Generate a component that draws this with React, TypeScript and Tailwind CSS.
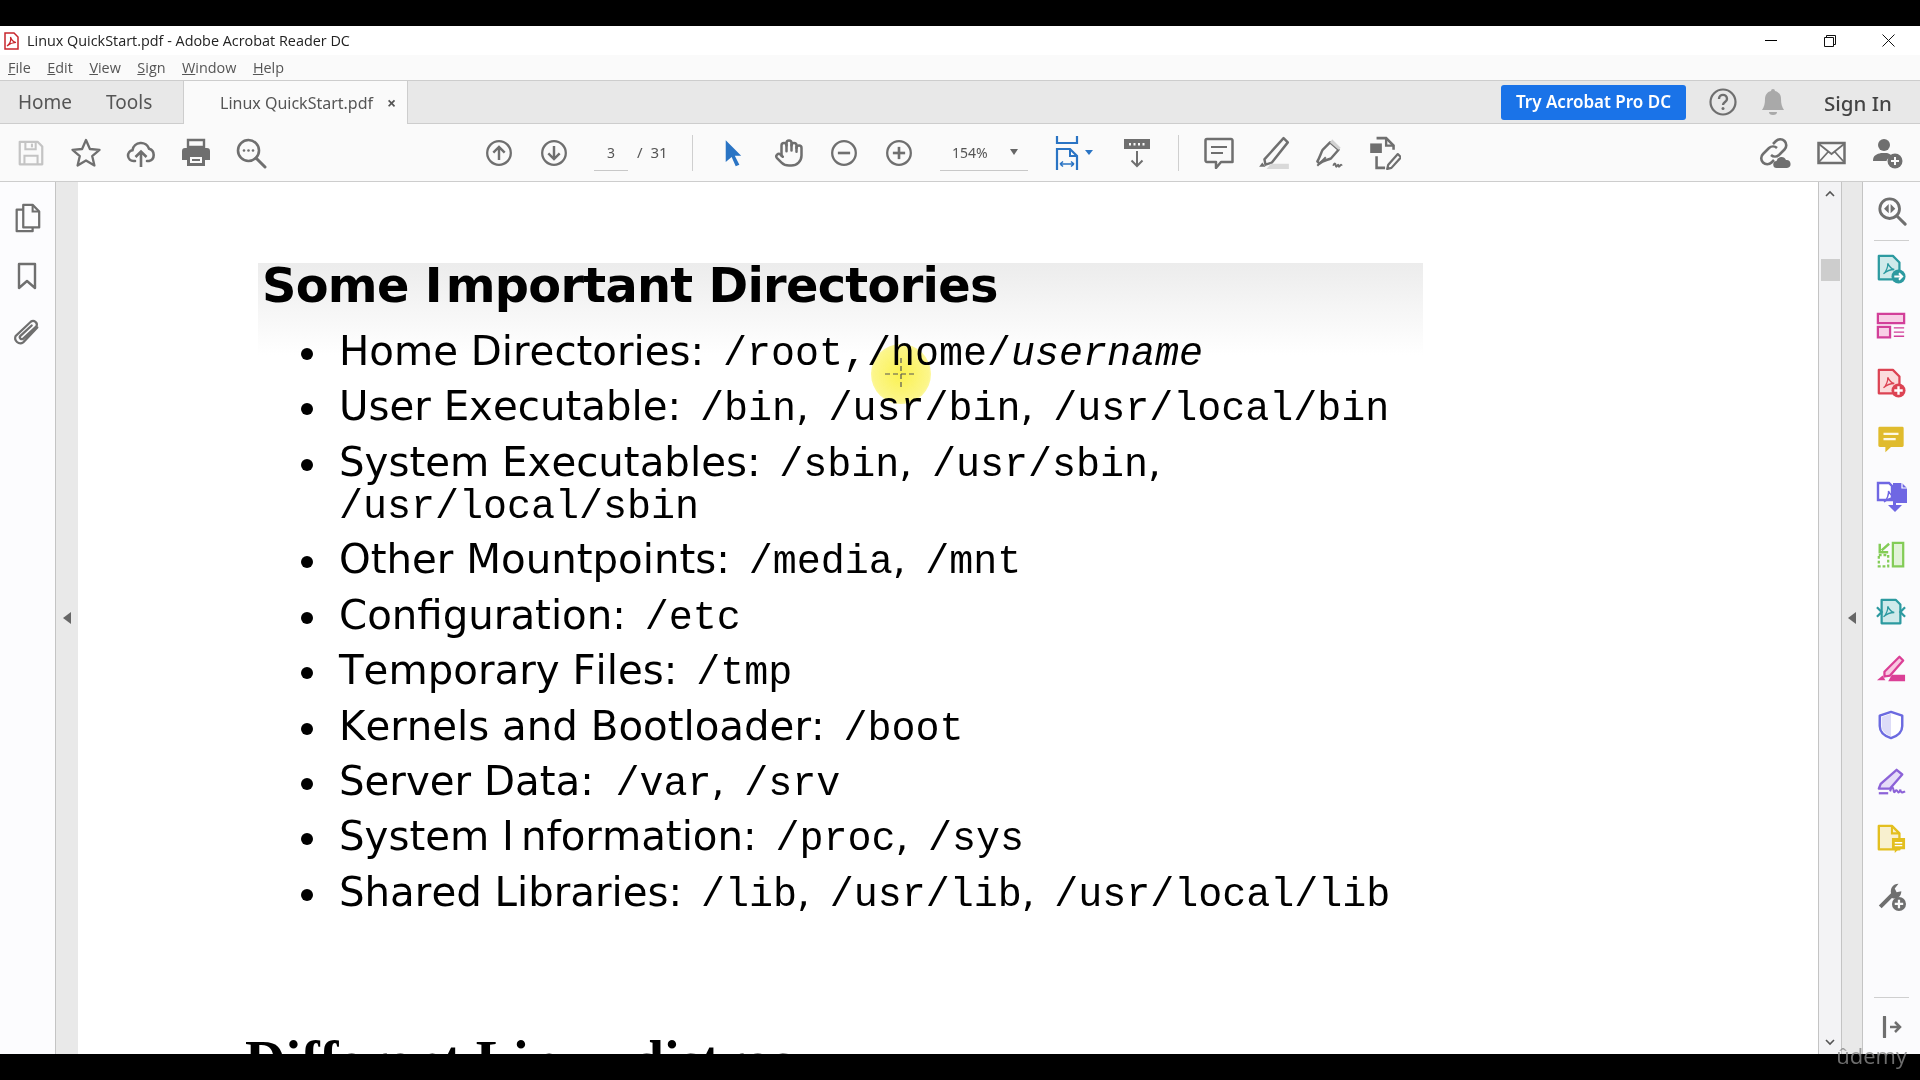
import React from 'react';
import { Hand } from 'lucide-react';

const G = '#6f6f6f';

function Svg({ size = 30, children, className = '' }: { size?: number; children: React.ReactNode; className?: string }) {
  return (
    <svg width={size} height={size} viewBox="0 0 32 32" fill="none" className={className}>
      {children}
    </svg>
  );
}

// toolbar icons
const SaveIcon = () => (
  <Svg>
    <path d="M4 4h19l5 5v19H4z" stroke="#c4c4c4" strokeWidth="2.4" strokeLinejoin="round" />
    <path d="M10 4v8h11V4M9 28v-9h14v9" stroke="#c4c4c4" strokeWidth="2.2" />
    <path d="M17 6v4" stroke="#c4c4c4" strokeWidth="2.2" />
  </Svg>
);
const StarIcon = () => (
  <Svg size={32}>
    <path d="M16 3l3.900 9 9.600.8-7.300 6.300 2.200 9.400L16 23.500l-8.400 5 2.200-9.400-7.300-6.300 9.600-.8z" stroke={G} strokeWidth="2.3" strokeLinejoin="round" />
  </Svg>
);
const UploadIcon = () => (
  <Svg size={32}>
    <path d="M10 24H8.500a5.500 5.500 0 0 1-1-10.900 8.600 8.600 0 0 1 16.600-1.400A6.400 6.400 0 0 1 24 24h-2" stroke={G} strokeWidth="2.6" strokeLinecap="round" />
    <path d="M16 30V15M10.500 20l5.500-5.500 5.500 5.500" stroke={G} strokeWidth="2.6" />
  </Svg>
);
const PrintIcon = () => (
  <Svg size={32}>
    <path d="M8 3h16v7H8z" stroke={G} strokeWidth="2.4" />
    <path d="M5 11h22a3 3 0 0 1 3 3v9h-5v-4H7v4H2v-9a3 3 0 0 1 3-3z" fill={G} />
    <path d="M7 18h18v11H7z" fill={G} />
    <path d="M10 20h12v6H10z" fill="#fafafa" />
    <path d="M12 22h8v2h-8z" fill={G} />
  </Svg>
);
const SearchMoreIcon = () => (
  <Svg size={32}>
    <circle cx="13.500" cy="13.500" r="10.500" stroke={G} strokeWidth="2.6" />
    <path d="M21 21l9 9" stroke={G} strokeWidth="3" strokeLinecap="round" />
    <circle cx="9" cy="13.500" r="1.300" fill={G} />
    <circle cx="13.500" cy="13.500" r="1.300" fill={G} />
    <circle cx="18" cy="13.500" r="1.300" fill={G} />
  </Svg>
);
const CircleArrow = ({ down }: { down?: boolean }) => (
  <Svg size={28}>
    <circle cx="16" cy="16" r="13.500" stroke={G} strokeWidth="2.6" />
    {down ? (
      <path d="M16 8v15M9.500 16.500L16 23l6.500-6.500" stroke={G} strokeWidth="2.8" />
    ) : (
      <path d="M16 24V9M9.500 15.500L16 9l6.500 6.500" stroke={G} strokeWidth="2.8" />
    )}
  </Svg>
);
const CircleSign = ({ plus }: { plus?: boolean }) => (
  <Svg size={28}>
    <circle cx="16" cy="16" r="13.500" stroke={G} strokeWidth="2.6" />
    <path d="M9 16h14" stroke={G} strokeWidth="3" />
    {plus && <path d="M16 9v14" stroke={G} strokeWidth="3" />}
  </Svg>
);
const CursorIcon = () => (
  <svg width="20" height="30" viewBox="0 0 22 30">
    <path d="M3 1l17 17h-7l5 10-4 1.500-4.500-10L3 25z" fill="#2a74c4" />
  </svg>
);
const FitIcon = () => (
  <svg width="26" height="34" viewBox="0 0 26 34" fill="none">
    <path d="M2 0v7h20V0" stroke="#2a74c4" strokeWidth="2.200" />
    <path d="M2 34V13h13l7 7v14" stroke="#2a74c4" strokeWidth="2.200" />
    <path d="M15 13v7h7" stroke="#2a74c4" strokeWidth="2" />
    <path d="M5 28h14M5 28l3-2.500M5 28l3 2.500M19 28l-3-2.500M19 28l-3 2.500" stroke="#2a74c4" strokeWidth="1.600" />
  </svg>
);
const ScrollIcon = () => (
  <svg width="28" height="30" viewBox="0 0 28 30" fill="none">
    <path d="M1 1h26v10H1z" fill={G} />
    <path d="M6 5h2v2.500H6zM10.500 5h2v2.500h-2zM15 5h2v2.500h-2zM19.500 5h2v2.500h-2z" fill="#fafafa" />
    <path d="M14 13v15M8.500 22.500L14 28l5.500-5.500" stroke={G} strokeWidth="2" />
  </svg>
);
const CommentIcon = () => (
  <Svg size={32}>
    <path d="M4 2h24a1.500 1.500 0 0 1 1.500 1.500V25H18l-5 6v-6H4a1.500 1.500 0 0 1-1.500-1.500V3.500A1.500 1.500 0 0 1 4 2z" stroke={G} strokeWidth="2.500" strokeLinejoin="round" />
    <path d="M8 10h16M8 16h12" stroke={G} strokeWidth="2.200" />
  </Svg>
);
const HighlightIcon = () => (
  <Svg size={34}>
    <path d="M25 2l4 4-15 19-6 2-1-5z" stroke={G} strokeWidth="2.300" strokeLinejoin="round" />
    <path d="M5 25l3 4H2z" fill={G} />
    <path d="M13 26h17v5H9z" fill="#d9d9d9" />
  </Svg>
);
const SignIcon = () => (
  <Svg size={34}>
    <path d="M17 6l8 7-7 8c-3 1.500-8 2-11 5l-2-2c2-3 3-7 5-11z" stroke={G} strokeWidth="2.300" strokeLinejoin="round" />
    <path d="M19 3l8 8-2 2-8-7z" fill="#d2d2d2" />
    <path d="M5 28l8-8" stroke={G} strokeWidth="1.800" />
    <path d="M20 28c1-3 2-3 2.500 0s2-3 2.500 0 2-3 3 0" stroke={G} strokeWidth="1.800" />
  </Svg>
);
const ExportEditIcon = () => (
  <Svg size={34}>
    <path d="M9 2h9l7 7v4" stroke={G} strokeWidth="2.400" />
    <path d="M18 2v7h7" stroke={G} strokeWidth="2.200" />
    <path d="M3 7h11v9H3z" fill={G} />
    <path d="M9 19v11h8" stroke={G} strokeWidth="2.400" />
    <path d="M20 27l9-10 3 3-9 10-4 1z" stroke={G} strokeWidth="2.100" strokeLinejoin="round" />
  </Svg>
);
const LinkCloudIcon = () => (
  <Svg size={32}>
    <path d="M14 7l3-3a6 6 0 0 1 8.500 8.500L20 18a6 6 0 0 1-8 0" stroke={G} strokeWidth="2.600" />
    <path d="M18 11a6 6 0 0 0-8 0l-6 6a6 6 0 0 0 8.500 8.500l2.500-2.500" stroke={G} strokeWidth="2.600" />
    <path d="M18 31a3.500 3.500 0 0 1-.5-7 5 5 0 0 1 9.500-1 4 4 0 0 1 1 8z" fill={G} />
  </Svg>
);
const MailIcon = () => (
  <svg width="29" height="24" viewBox="0 0 29 24" fill="none">
    <path d="M1.500 2h26v20h-26z" stroke={G} strokeWidth="2.500" />
    <path d="M2 3l12.500 10L27 3M2 21l9-10M27 21l-9-10" stroke={G} strokeWidth="1.800" />
  </svg>
);
const UserPlusIcon = () => (
  <Svg size={32}>
    <circle cx="13" cy="8" r="6" fill={G} />
    <path d="M2 24c0-6 4-7 8-8h6c2 .5 4 1.500 5 3-3 1-5 3-5.500 5z" fill={G} />
    <circle cx="24" cy="24" r="7.500" fill={G} />
    <path d="M24 20v8M20 24h8" stroke="#fafafa" strokeWidth="2" />
  </Svg>
);
const HelpIcon = () => (
  <svg width="28" height="28" viewBox="0 0 28 28" fill="none">
    <circle cx="14" cy="14" r="12.500" stroke={G} strokeWidth="2.200" />
    <path d="M10 11c0-5.500 8-5.500 8 0 0 3-4 3-4 6" stroke={G} strokeWidth="2.400" />
    <circle cx="14" cy="20.500" r="1.500" fill={G} />
  </svg>
);
const BellIcon = () => (
  <svg width="24" height="28" viewBox="0 0 24 28">
    <path d="M12 1a2 2 0 0 1 2 2c4 1 6 4 6 8 0 5 1 8 3 11H1c2-3 3-6 3-11 0-4 2-7 6-8a2 2 0 0 1 2-2z" fill="#a9a9a9" />
    <path d="M8 24h8a4 3 0 0 1-8 0z" fill="#a9a9a9" />
  </svg>
);

// left rail
const PagesIcon = () => (
  <Svg>
    <path d="M12 2h10l7 7v17H12z" stroke={G} strokeWidth="2.400" strokeLinejoin="round" />
    <path d="M22 2v7h7" stroke={G} strokeWidth="2.200" />
    <path d="M12 7H5v23h17v-4" stroke={G} strokeWidth="2.400" strokeLinejoin="round" />
  </Svg>
);
const BookmarkIcon = () => (
  <svg width="20" height="28" viewBox="0 0 20 28" fill="none">
    <path d="M2 2h16v24l-8-7-8 7z" stroke={G} strokeWidth="2.400" strokeLinejoin="round" />
  </svg>
);
const ClipIcon = () => (
  <Svg size={30}>
    <path d="M27 10L12 26a5.500 5.500 0 0 1-8-7L20 4a4 4 0 0 1 6 5L12 22a2 2 0 0 1-3-3L21 8" stroke={G} strokeWidth="2.400" strokeLinecap="round" />
  </Svg>
);

// right rail, colored tools
const FindIcon = () => (
  <Svg size={30}>
    <circle cx="13.500" cy="13.500" r="10.500" stroke={G} strokeWidth="3" />
    <path d="M21 21l9 9" stroke={G} strokeWidth="3.200" strokeLinecap="round" />
    <path d="M12.500 8.500v10l-5-5zM14.500 8.500v10l5-5z" fill={G} />
  </Svg>
);
const PdfGlyph = ({ c }: { c: string }) => (
  <path d="M8 21c3-2 5-8 4.500-11 2 4 4 6 7 6.500-4 0-8 1.500-11.500 4.500z" stroke={c} strokeWidth="1.400" fill="none" />
);
const tealDoc = '#2c9aa0';
const ExportPdfIcon = () => (
  <Svg>
    <path d="M3 2h15l7 7v18H3z" fill="#cfeaea" stroke={tealDoc} strokeWidth="2.400" strokeLinejoin="round" />
    <PdfGlyph c={tealDoc} />
    <circle cx="24" cy="24" r="7.500" fill={tealDoc} />
    <path d="M19.500 24h8M24.500 20.500l3.500 3.500-3.500 3.500" stroke="#fff" strokeWidth="2" />
  </Svg>
);
const LayoutIcon = () => (
  <Svg>
    <path d="M2 3h28v10H2z" fill="#f8cfe6" stroke="#d23f99" strokeWidth="2.400" />
    <path d="M2 17h13v11H2z" fill="#f8cfe6" stroke="#d23f99" strokeWidth="2.400" />
    <path d="M19 18h11M19 22.500h11M19 27h11" stroke="#d23f99" strokeWidth="1.500" />
  </Svg>
);
const CreatePdfIcon = () => (
  <Svg>
    <path d="M3 2h15l7 7v18H3z" fill="#fbdcdc" stroke="#dc4353" strokeWidth="2.400" strokeLinejoin="round" />
    <PdfGlyph c="#dc4353" />
    <circle cx="24" cy="24" r="7.500" fill="#dc4353" />
    <path d="M24 19.500v9M19.500 24h9" stroke="#fff" strokeWidth="2.500" />
  </Svg>
);
const NoteIcon = () => (
  <Svg>
    <path d="M4 3h24a1.500 1.500 0 0 1 1.500 1.500V23a1.500 1.500 0 0 1-1.500 1.500H16L10 30v-5.500H4A1.500 1.500 0 0 1 2.500 23V4.500A1.500 1.500 0 0 1 4 3z" fill="#e0bb2d" />
    <path d="M8 10.500h16M8 16h13" stroke="#fdf8e4" strokeWidth="2.400" />
  </Svg>
);
const CombineIcon = () => (
  <Svg size={32}>
    <path d="M2 2h11l3 3v14H2z" fill="#fff" stroke="#6f67e3" strokeWidth="2.400" />
    <PdfGlyph c="#6f67e3" />
    <path d="M17 2h9l5 5v15H20V19h-3z" fill="#6f67e3" />
    <path d="M26 2v5h5" stroke="#fff" strokeWidth="1.200" />
    <path d="M17 15v9h-5l7 7 7-7h-6v-9z" fill="#6f67e3" />
  </Svg>
);
const CompressIcon = () => (
  <Svg>
    <path d="M18 3h11v25H18z" fill="#e2f3d8" stroke="#83cc57" strokeWidth="2.400" />
    <path d="M3 16h10v12H3z" stroke="#83cc57" strokeWidth="2.400" strokeDasharray="3 2" />
    <path d="M14 4L6 11M4 4v9h9" stroke="#83cc57" strokeWidth="2.600" />
  </Svg>
);
const RedactIcon = () => (
  <Svg>
    <path d="M6 3h15l5 5v20H6z" fill="#cfeaea" stroke={tealDoc} strokeWidth="2.400" strokeLinejoin="round" />
    <PdfGlyph c={tealDoc} />
    <path d="M1 11l5 5-5 5M31 11l-5 5 5 5" stroke={tealDoc} strokeWidth="2.400" />
  </Svg>
);
const PinkHighlightIcon = () => (
  <Svg>
    <path d="M25 3l4 4-14 16-6 1 0-5z" fill="#f9c9e2" stroke="#db3f96" strokeWidth="2.400" strokeLinejoin="round" />
    <path d="M7 23l3 5H1z" fill="#db3f96" />
    <path d="M17 22h14v7H13z" fill="#db3f96" />
  </Svg>
);
const ShieldIcon = () => (
  <Svg>
    <path d="M16 2l12 4v11c0 7-6 11-12 13-6-2-12-6-12-13V6z" fill="#fff" stroke="#6b6ae0" strokeWidth="2.600" strokeLinejoin="round" />
    <path d="M16 4L6 7.500V17c0 6 5 9 10 11z" fill="#dddcf8" />
  </Svg>
);
const PurpleSignIcon = () => (
  <Svg>
    <path d="M22 3l6 5-13 15H3l2-5z" fill="#e6dcf8" stroke="#8c62d8" strokeWidth="2.500" strokeLinejoin="round" />
    <path d="M3 28h10" stroke="#8c62d8" strokeWidth="2.400" />
    <path d="M15 26c2-6 3-6 4 0 1 3 2-4 4 0 1 2 2 1 3-2 0 3 2 4 5 2" stroke="#8c62d8" strokeWidth="2.200" />
  </Svg>
);
const YellowDocIcon = () => (
  <Svg>
    <path d="M3 2h14l8 8v17H3z" fill="#f8f0cf" stroke="#e3bf1f" strokeWidth="2.500" strokeLinejoin="round" />
    <path d="M17 2v8h8" stroke="#e3bf1f" strokeWidth="2.200" />
    <path d="M17 15h14v12h-7l-4 4v-4h-3z" fill="#e3bf1f" />
    <path d="M20 20h8M20 23h8" stroke="#fff" strokeWidth="1.400" />
  </Svg>
);
const ToolsPlusIcon = () => (
  <Svg>
    <path d="M3 26L16 13c-1-5 2-10 8-10l-4 5 2 4 5-1c0 6-5 9-10 7L6 29z" fill={G} />
    <circle cx="24.500" cy="24.500" r="7.500" fill={G} />
    <path d="M24.500 20v9M20 24.500h9" stroke="#fafafa" strokeWidth="2.400" />
  </Svg>
);
const CollapseIcon = () => (
  <svg width="20" height="22" viewBox="0 0 20 22" fill="none">
    <path d="M2.500 1v20" stroke={G} strokeWidth="3.200" strokeLinecap="round" />
    <path d="M8 11h10M13 6l5 5-5 5" stroke={G} strokeWidth="2.500" />
  </svg>
);

const Triangle = ({ cls }: { cls: string }) => <span className={`w-0 h-0 ${cls}`} />;

const Slot = ({ children, w = 'w-[55px]' }: { children: React.ReactNode; w?: string }) => (
  <div className={`${w} h-full flex items-center justify-center shrink-0`}>{children}</div>
);

const Sep = ({ cls }: { cls: string }) => <div className={`w-px h-[36px] bg-[#cfcfcf] shrink-0 ${cls}`} />;

// tight leading so the mono runs don't stretch the line box
const Mono = ({ children }: { children: React.ReactNode }) => (
  <span className="font-['Liberation_Mono',monospace] text-[40px] leading-[30px]">{children}</span>
);

const Comma = () => <span className="mr-[7px]">, </span>;

const items: { label: React.ReactNode; content: React.ReactNode }[] = [
  { label: 'Home Directories:', content: <Mono>/root,/home/<em>username</em></Mono> },
  { label: 'User Executable:', content: <><Mono>/bin</Mono><Comma /><Mono>/usr/bin</Mono><Comma /><Mono>/usr/local/bin</Mono></> },
  { label: 'System Executables:', content: <><Mono>/sbin</Mono><Comma /><Mono>/usr/sbin</Mono>,<br /><Mono>/usr/local/sbin</Mono></> },
  { label: 'Other Mountpoints:', content: <><Mono>/media</Mono><Comma /><Mono>/mnt</Mono></> },
  { label: 'Configuration:', content: <Mono>/etc</Mono> },
  { label: 'Temporary Files:', content: <Mono>/tmp</Mono> },
  { label: 'Kernels and Bootloader:', content: <Mono>/boot</Mono> },
  { label: 'Server Data:', content: <span className="ml-[3px]"><Mono>/var</Mono><Comma /><Mono>/srv</Mono></span> },
  { label: <>System <span className="mr-[7px]">I</span>nformation:</>, content: <><Mono>/proc</Mono><Comma /><Mono>/sys</Mono></> },
  { label: 'Shared Libraries:', content: <><Mono>/lib</Mono><Comma /><Mono>/usr/lib</Mono><Comma /><Mono>/usr/local/lib</Mono></> },
];

const railIcons = [ExportPdfIcon, LayoutIcon, CreatePdfIcon, NoteIcon, CombineIcon, CompressIcon, RedactIcon, PinkHighlightIcon, ShieldIcon, PurpleSignIcon, YellowDocIcon, ToolsPlusIcon];

export default function App() {
  return (
    <div className="relative flex flex-col h-screen w-full bg-black overflow-hidden font-['Noto_Sans',sans-serif] text-[#444]">
      <div className="h-[26px] shrink-0 bg-black" />

      {/* Title bar */}
      <div className="h-[29px] shrink-0 bg-white flex items-center pl-[4px] text-[#222]">
        <svg width="15" height="18" viewBox="0 0 15 18" fill="none" className="mr-[8px]">
          <path d="M1 1h9l4 4v12H1z" fill="#fff" stroke="#c8262c" strokeWidth="1.500" />
          <path d="M3 14c3-2 4-6 3.500-9 1 3 3 5 5.500 5.500-3 0-6 1-9 3.500z" stroke="#c8262c" strokeWidth="1.200" />
        </svg>
        <span className="text-[14.400px] font-['Open_Sans',sans-serif]">Linux QuickStart.pdf - Adobe Acrobat Reader DC</span>
        <div className="ml-auto flex items-center h-full">
          <Slot w="w-[59px]"><div className="w-[12px] h-px bg-black" /></Slot>
          <Slot w="w-[59px]">
            <svg width="12" height="12" viewBox="0 0 12 12" fill="none" stroke="#111"><path d="M.5 2.500h9v9h-9zM2.500 2.500v-2h9v9h-2" /></svg>
          </Slot>
          <Slot w="w-[59px]">
            <svg width="13" height="13" viewBox="0 0 13 13" stroke="#111"><path d="M.5.500l12 12M12.500.500l-12 12" /></svg>
          </Slot>
          <div className="w-[2px]" />
        </div>
      </div>

      {/* Menu bar */}
      <div className="h-[25px] shrink-0 bg-[#fafafa] flex items-center pl-[8px] gap-[16.500px] text-[14.400px] text-[#555] font-['Open_Sans',sans-serif]">
        {['File', 'Edit', 'View', 'Sign', 'Window', 'Help'].map((m) => (
          <span key={m}><span className="underline">{m[0]}</span>{m.slice(1)}</span>
        ))}
      </div>

      {/* Tabs */}
      <div className="h-[44px] shrink-0 bg-[#e8e8e8] border-y border-[#cdcdcd] flex items-stretch">
        <div className="w-[183px] flex items-center pl-[18px] gap-[34px] text-[19px] text-[#555]">
          <span>Home</span>
          <span>Tools</span>
        </div>
        <div className="w-[225px] bg-[#fafafa] border-x border-[#cdcdcd] -mb-px flex items-center pl-[36px] text-[16px] text-[#555] gap-[14px]">
          <span>Linux QuickStart.pdf</span>
          <span className="text-[16px] font-bold leading-none">×</span>
        </div>
        <div className="ml-auto flex items-center">
          <div className="w-[185px] h-[35px] rounded-[3px] bg-[#1a73e8] text-white text-[17px] font-semibold flex items-center justify-center">Try Acrobat Pro DC</div>
          <div className="w-[23px]" />
          <HelpIcon />
          <div className="w-[24px]" />
          <BellIcon />
          <div className="w-[39px]" />
          <span className="text-[20.500px] font-medium text-[#444] w-[92px] pt-[2px]">Sign In</span>
          <div className="w-[4px]" />
        </div>
      </div>

      {/* Toolbar */}
      <div className="h-[58px] shrink-0 bg-[#fafafa] border-b border-[#cdcdcd] flex items-center pl-[3px] text-[#555]">
        <Slot><SaveIcon /></Slot>
        <Slot><StarIcon /></Slot>
        <Slot><UploadIcon /></Slot>
        <Slot><PrintIcon /></Slot>
        <Slot><SearchMoreIcon /></Slot>
        <div className="w-[193px] shrink-0" />
        <Slot><CircleArrow /></Slot>
        <Slot><CircleArrow down /></Slot>
        <div className="ml-[13px] w-[34px] h-[36px] border-b border-[#c8c8c8] flex items-center justify-center text-[14px] shrink-0">3</div>
        <span className="ml-[9px] w-[46px] text-[15px] shrink-0 whitespace-pre">/  31</span>
        <Sep cls="ml-[9px]" />
        <Slot w="w-[68px] pl-[12px]"><CursorIcon /></Slot>
        <Slot><Hand size={30} color={G} strokeWidth={2} /></Slot>
        <Slot><CircleSign /></Slot>
        <Slot><CircleSign plus /></Slot>
        <div className="ml-[14px] w-[88px] h-[36px] border-b border-[#c8c8c8] flex items-center pl-[12px] gap-[22px] text-[14px] shrink-0">
          <span>154%</span>
          <Triangle cls="border-x-[4px] border-x-transparent border-t-[6px] border-t-[#666]" />
        </div>
        <div className="ml-[27px] w-[38px] flex items-center gap-[4px] shrink-0">
          <FitIcon />
          <Triangle cls="border-x-[4px] border-x-transparent border-t-[5px] border-t-[#2a74c4]" />
        </div>
        <Slot w="w-[72px] ml-[8px]"><ScrollIcon /></Slot>
        <Sep cls="ml-[5px]" />
        <Slot w="w-[55px] ml-[12px]"><CommentIcon /></Slot>
        <Slot><HighlightIcon /></Slot>
        <Slot><SignIcon /></Slot>
        <Slot><ExportEditIcon /></Slot>
        <div className="ml-auto flex items-center h-full pr-[5px]">
          <Slot w="w-[56px]"><LinkCloudIcon /></Slot>
          <Slot w="w-[56px]"><MailIcon /></Slot>
          <Slot w="w-[56px]"><UserPlusIcon /></Slot>
        </div>
      </div>

      {/* Workspace */}
      <div className="flex-1 min-h-0 flex">
        <div className="w-[56px] shrink-0 bg-[#fcfcfe] border-r border-[#c4c4c4] flex flex-col items-center pt-[21px] pr-[2px]">
          <div className="h-[59px]"><PagesIcon /></div>
          <div className="h-[56px]"><BookmarkIcon /></div>
          <ClipIcon />
        </div>
        <div className="w-[22px] shrink-0 bg-[#e9e9e9] flex items-center justify-center">
          <Triangle cls="border-y-[6px] border-y-transparent border-r-[8px] border-r-[#666]" />
        </div>

        {/* PDF page */}
        <div className="relative flex-1 min-w-0 bg-white overflow-hidden text-black pt-[81px] pl-[180px]">
          <div className="w-[1165px] bg-[linear-gradient(#ececec,#ffffff_92px)]">
            <h1 className="pl-[4px] pt-[2px] h-[42px] block leading-[42px] font-['DejaVu_Sans',sans-serif] font-bold text-[47.800px] tracking-[-0.700px] [font-kerning:none] whitespace-nowrap">Some <span className="mr-[4px]">I</span>mportant Directories</h1>
            <ul className="mt-[26px] font-['DejaVu_Sans',sans-serif] text-[40.300px] leading-[41.600px] [font-kerning:none] flex flex-col gap-[13.900px]">
              {items.map((it, i) => (
                <li key={i} className="flex whitespace-nowrap">
                  <span className="w-[38px] ml-[43px] shrink-0 flex pt-[17px]"><span className="w-[12px] h-[12px] rounded-full bg-black" /></span>
                  <div>{it.label} <span className="ml-[6px]">{it.content}</span></div>
                </li>
              ))}
            </ul>
          </div>
          <div className="mt-[119px] ml-[-13px] font-['Liberation_Serif',serif] font-bold text-[56px] leading-none whitespace-nowrap">Different Linux distros</div>

          {/* cursor highlight */}
          <div className="absolute left-[793px] top-[162px] w-[60px] h-[60px] rounded-full mix-blend-multiply bg-[radial-gradient(circle,rgba(250,240,60,0.9),rgba(250,240,60,0.6)_65%,rgba(250,240,60,0)_100%)] flex items-center justify-center">
            <svg width="32" height="32" viewBox="0 0 32 32" stroke="#555" strokeWidth="1.200" strokeDasharray="5 3">
              <path d="M16 0v32M0 16h32" />
            </svg>
          </div>
        </div>

        {/* Scrollbar */}
        <div className="w-[24px] shrink-0 bg-[#f3f3f5] border-x border-[#c4c4c4] flex flex-col items-center py-[8px]">
          <svg width="10" height="7" viewBox="0 0 10 7" fill="none" stroke="#555" strokeWidth="1.600"><path d="M1 6l4-4 4 4" /></svg>
          <div className="mt-[62px] w-[19px] h-[22px] bg-[#cdcdcd]" />
          <svg className="mt-auto" width="10" height="7" viewBox="0 0 10 7" fill="none" stroke="#555" strokeWidth="1.600"><path d="M1 1l4 4 4-4" /></svg>
        </div>
        <div className="w-[21px] shrink-0 bg-[#e9e9e9] border-r border-[#c4c4c4] flex items-center justify-center">
          <Triangle cls="border-y-[6px] border-y-transparent border-r-[8px] border-r-[#666]" />
        </div>

        {/* Tools rail */}
        <div className="w-[57px] shrink-0 bg-[#fbfbfd] flex flex-col items-center pt-[14px] pb-[16px]">
          <FindIcon />
          <div className="w-[35px] h-px bg-[#cfcfcf] mt-[14px] mb-[13px]" />
          <div className="flex flex-col gap-[26.800px]">
            {railIcons.map((Icon, i) => <Icon key={i} />)}
          </div>
          <div className="mt-auto w-[35px] h-px bg-[#cfcfcf]" />
          <div className="mt-[18px]"><CollapseIcon /></div>
        </div>
      </div>

      <div className="h-[26px] shrink-0 bg-black" />

      {/* Udemy watermark */}
      <div className="absolute right-[13px] bottom-[14px] text-[22px] leading-none font-medium text-[#8a8a8a]/80 font-['Open_Sans',sans-serif]">ûdemy</div>
    </div>
  );
}
